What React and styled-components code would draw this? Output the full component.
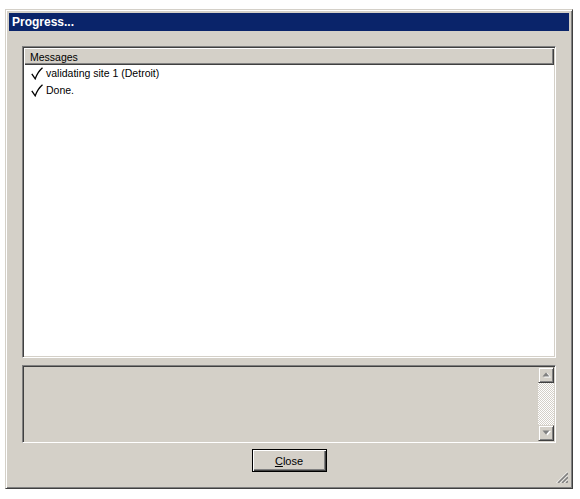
import React from "react";
import styled, { createGlobalStyle } from "styled-components";

const GlobalStyle = createGlobalStyle`
  body {
    margin: 0;
    background: #ffffff;
    font-family: "Liberation Sans", Arial, sans-serif;
  }
`;

const Page = styled.div`
  padding: 9px 0 0 5px;
`;

const Window = styled.div`
  position: relative;
  box-sizing: border-box;
  width: 568px;
  height: 480px;
  display: flex;
  flex-direction: column;
  padding: 3px;
  background: #d4d0c8;
  border: 1px solid;
  border-color: #d4d0c8 #404040 #404040 #d4d0c8;
  box-shadow: inset 1px 1px #ffffff, inset -1px -1px #808080;
`;

const TitleBar = styled.div`
  height: 18px;
  display: flex;
  align-items: center;
  padding-left: 3px;
  background: #0a246a;
  color: #ffffff;
  font-weight: bold;
  font-size: 12px;
`;

const Body = styled.div`
  flex: 1;
  display: flex;
  flex-direction: column;
  padding: 15px 13px 13px 13px;
`;

const Sunken = styled.div`
  box-sizing: border-box;
  border: 1px solid;
  border-color: #808080 #ffffff #ffffff #808080;
  box-shadow: inset 1px 1px #404040, inset -1px -1px #d4d0c8;
  padding: 1px;
`;

const MessageList = styled(Sunken)`
  height: 312px;
  background: #ffffff;
  display: flex;
  flex-direction: column;
`;

const ListHeader = styled.div`
  height: 17px;
  box-sizing: border-box;
  display: flex;
  align-items: center;
  padding-left: 6px;
  background: #d4d0c8;
  font-size: 10.5px;
  color: #000;
  box-shadow: inset 1px 1px #ffffff, inset -1px -1px #404040, inset -2px -2px #808080;
`;

const Row = styled.div`
  height: 17px;
  display: flex;
  align-items: center;
  gap: 3px;
  padding: 0 0 1px 7px;
  box-sizing: border-box;
  font-size: 10.5px;
  color: #000;
`;

const DetailPanel = styled(Sunken)`
  height: 78px;
  margin-top: 7px;
  display: flex;
  justify-content: flex-end;
`;

const ScrollBar = styled.div`
  width: 16px;
  display: flex;
  flex-direction: column;
`;

const ScrollButton = styled.div`
  box-sizing: border-box;
  width: 16px;
  height: 16px;
  display: flex;
  align-items: center;
  justify-content: center;
  background: #d4d0c8;
  border: 1px solid;
  border-color: #d4d0c8 #404040 #404040 #d4d0c8;
  box-shadow: inset 1px 1px #ffffff, inset -1px -1px #808080;
`;

const Track = styled.div`
  flex: 1;
  background-image: conic-gradient(#d4d0c8 25%, #ffffff 0 50%, #d4d0c8 0 75%, #ffffff 0);
  background-size: 2px 2px;
`;

const Footer = styled.div`
  display: flex;
  justify-content: center;
  margin-top: 6px;
`;

const Button = styled.button`
  box-sizing: border-box;
  width: 75px;
  height: 23px;
  padding: 0;
  background: #d4d0c8;
  border: 1px solid #000000;
  box-shadow: inset 1px 1px #ffffff, inset -1px -1px #404040, inset -2px -2px #808080;
  font-family: "Liberation Sans", Arial, sans-serif;
  font-size: 11px;
  color: #000;
`;

const Grip = styled.svg`
  position: absolute;
  right: 4px;
  bottom: 5px;
`;

const Check = () => (
  <svg width="12" height="13" viewBox="0 0 12 13">
    <path
      d="M0.8 6.8 L4.2 11.8 C5.8 7.5 8 3.8 11.5 0.8"
      fill="none"
      stroke="#000"
      strokeWidth="1.3"
    />
  </svg>
);

const Arrow = ({ down }) => (
  <svg width="9" height="6" viewBox="0 0 9 6">
    <path d={down ? "M2 1 h7 l-3.5 4.5 z" : "M2 5.5 h7 l-3.5 -4.5 z"} fill="#ffffff" />
    <path d={down ? "M0.5 0.5 h7 l-3.5 4 z" : "M0.5 4.5 h7 l-3.5 -4 z"} fill="#808080" />
  </svg>
);

const messages = ["validating site 1 (Detroit)", "Done."];

export default function App() {
  return (
    <Page>
      <GlobalStyle />
      <Window>
        <TitleBar>Progress...</TitleBar>
        <Body>
          <MessageList>
            <ListHeader>Messages</ListHeader>
            {messages.map((m) => (
              <Row key={m}>
                <Check />
                {m}
              </Row>
            ))}
          </MessageList>
          <DetailPanel>
            <ScrollBar>
              <ScrollButton>
                <Arrow />
              </ScrollButton>
              <Track />
              <ScrollButton>
                <Arrow down />
              </ScrollButton>
            </ScrollBar>
          </DetailPanel>
          <Footer>
            <Button>
              <u>C</u>lose
            </Button>
          </Footer>
        </Body>
        <Grip width="12" height="12" viewBox="0 0 12 12">
          {[0, 4, 8].map((o) => (
            <g key={o}>
              <line x1={12} y1={o + 0.5} x2={o + 0.5} y2={12} stroke="#ffffff" strokeWidth="1" />
              <line x1={12} y1={o + 2} x2={o + 2} y2={12} stroke="#808080" strokeWidth="1.6" />
            </g>
          ))}
        </Grip>
      </Window>
    </Page>
  );
}
